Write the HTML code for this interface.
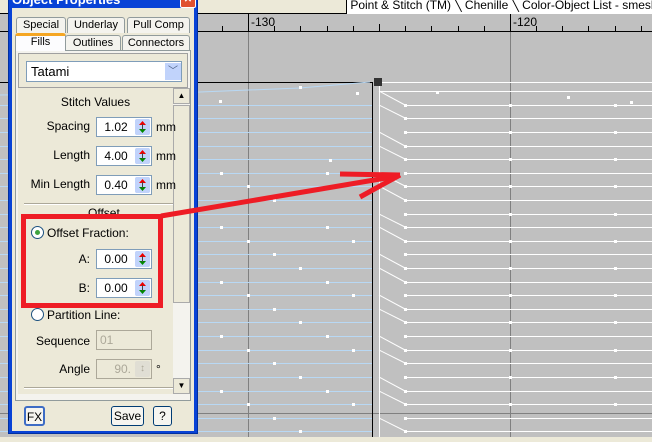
<!DOCTYPE html>
<html><head><meta charset="utf-8"><style>
*{margin:0;padding:0;box-sizing:border-box}
body{width:652px;height:442px;overflow:hidden;background:#c0c0c0;font-family:Tahoma,"Liberation Sans",sans-serif;font-size:12px;position:relative}
.abs{position:absolute}
.tab{position:absolute;border:1px solid #919b9c;border-bottom:none;background:#f4f3ee;border-radius:3px 3px 0 0;text-align:center;font-size:11px;line-height:14px}
.lbl{position:absolute;text-align:right;font-size:12px}
.inp{position:absolute;width:56px;height:20px;border:1px solid #7f9db9;background:#fff;font-size:12px;line-height:18px;padding-right:16px;text-align:center}
.spin{position:absolute;right:1px;top:1px;width:15px;height:16px;background:#c1d3fb;border-radius:2px}
.btn{position:absolute;height:20px;border:1px solid #003c74;border-radius:3px;background:#f6f5f0;text-align:center;line-height:18px;font-size:12px}
</style></head><body>
<div class="abs" style="left:0;top:0;width:652px;height:14px;background:#ece9d8;border-bottom:1px solid #000"></div>
<div class="abs" style="left:346px;top:0;width:306px;height:14px;background:#fff;border-left:1px solid #000;font-size:12px;line-height:10px;white-space:nowrap;overflow:hidden">&nbsp;Point &amp; Stitch (TM) ╲ Chenille ╲ Color-Object List - smesharik_c</div>
<div class="abs" style="left:0;top:14px;width:652px;height:18px;background:#c0c0c0;border-bottom:1px solid #000"></div>
<svg class="abs" style="left:0;top:0" width="652" height="442">
<defs>
<g id="sp"><rect width="15" height="16" rx="2" fill="#c1d3fb"/><path d="M4 6 L7.5 2 L11 6Z" fill="#e00"/><path d="M4 10 L7.5 14 L11 10Z" fill="#080"/><line x1="7.5" y1="5" x2="7.5" y2="11" stroke="#444"/></g>
</defs>
<g stroke="#000" stroke-width="1">
<line x1="248.5" y1="14" x2="248.5" y2="32"/><line x1="510.5" y1="14" x2="510.5" y2="32"/>
<line x1="222.5" y1="26" x2="222.5" y2="32"/><line x1="274.5" y1="26" x2="274.5" y2="32"/><line x1="300.5" y1="26" x2="300.5" y2="32"/><line x1="327.5" y1="26" x2="327.5" y2="32"/><line x1="353.5" y1="26" x2="353.5" y2="32"/><line x1="379.5" y1="24" x2="379.5" y2="32"/><line x1="405.5" y1="26" x2="405.5" y2="32"/><line x1="431.5" y1="26" x2="431.5" y2="32"/><line x1="458.5" y1="26" x2="458.5" y2="32"/><line x1="484.5" y1="26" x2="484.5" y2="32"/><line x1="536.5" y1="26" x2="536.5" y2="32"/><line x1="562.5" y1="26" x2="562.5" y2="32"/><line x1="588.5" y1="26" x2="588.5" y2="32"/><line x1="615.5" y1="26" x2="615.5" y2="32"/><line x1="641.5" y1="26" x2="641.5" y2="32"/>
</g>
<text x="251" y="26" font-size="12" font-family="Liberation Sans">-130</text>
<text x="513" y="26" font-size="12" font-family="Liberation Sans">-120</text>
<g stroke="#808080"><line x1="248.5" y1="32" x2="248.5" y2="437"/><line x1="510.5" y1="32" x2="510.5" y2="437"/><line x1="0" y1="413.5" x2="652" y2="413.5"/></g>
<line x1="0" y1="82.5" x2="372" y2="82.5" stroke="#000"/>
<g stroke="#b8d8f4" stroke-width="1">
<polyline fill="none" points="0,95 200,92 300,88 370,82"/>
<line x1="0" y1="105.5" x2="372" y2="105.5"/><line x1="0" y1="118.5" x2="372" y2="118.5"/><line x1="0" y1="132.5" x2="372" y2="132.5"/><line x1="0" y1="146.5" x2="372" y2="146.5"/><line x1="0" y1="159.5" x2="372" y2="159.5"/><line x1="0" y1="173.5" x2="372" y2="173.5"/><line x1="0" y1="186.5" x2="372" y2="186.5"/><line x1="0" y1="200.5" x2="372" y2="200.5"/><line x1="0" y1="214.5" x2="372" y2="214.5"/><line x1="0" y1="227.5" x2="372" y2="227.5"/><line x1="0" y1="241.5" x2="372" y2="241.5"/><line x1="0" y1="254.5" x2="372" y2="254.5"/><line x1="0" y1="268.5" x2="372" y2="268.5"/><line x1="0" y1="282.5" x2="372" y2="282.5"/><line x1="0" y1="295.5" x2="372" y2="295.5"/><line x1="0" y1="309.5" x2="372" y2="309.5"/><line x1="0" y1="322.5" x2="372" y2="322.5"/><line x1="0" y1="336.5" x2="372" y2="336.5"/><line x1="0" y1="350.5" x2="372" y2="350.5"/><line x1="0" y1="363.5" x2="372" y2="363.5"/><line x1="0" y1="377.5" x2="372" y2="377.5"/><line x1="0" y1="391.5" x2="372" y2="391.5"/><line x1="0" y1="404.5" x2="372" y2="404.5"/><line x1="0" y1="418.5" x2="372" y2="418.5"/><line x1="0" y1="431.5" x2="372" y2="431.5"/>
</g>
<g stroke="#fff" stroke-width="1">
<line x1="379" y1="82.5" x2="652" y2="82.5"/>
<line x1="379" y1="91.5" x2="652" y2="91.5"/><line x1="405" y1="105.5" x2="652" y2="105.5"/><line x1="405" y1="118.5" x2="652" y2="118.5"/><line x1="405" y1="132.5" x2="652" y2="132.5"/><line x1="405" y1="146.5" x2="652" y2="146.5"/><line x1="405" y1="159.5" x2="652" y2="159.5"/><line x1="405" y1="173.5" x2="652" y2="173.5"/><line x1="405" y1="186.5" x2="652" y2="186.5"/><line x1="405" y1="200.5" x2="652" y2="200.5"/><line x1="405" y1="214.5" x2="652" y2="214.5"/><line x1="405" y1="227.5" x2="652" y2="227.5"/><line x1="405" y1="241.5" x2="652" y2="241.5"/><line x1="405" y1="254.5" x2="652" y2="254.5"/><line x1="405" y1="268.5" x2="652" y2="268.5"/><line x1="405" y1="282.5" x2="652" y2="282.5"/><line x1="405" y1="295.5" x2="652" y2="295.5"/><line x1="405" y1="309.5" x2="652" y2="309.5"/><line x1="405" y1="322.5" x2="652" y2="322.5"/><line x1="405" y1="336.5" x2="652" y2="336.5"/><line x1="405" y1="350.5" x2="652" y2="350.5"/><line x1="405" y1="363.5" x2="652" y2="363.5"/><line x1="405" y1="377.5" x2="652" y2="377.5"/><line x1="405" y1="391.5" x2="652" y2="391.5"/><line x1="405" y1="404.5" x2="652" y2="404.5"/><line x1="405" y1="418.5" x2="652" y2="418.5"/><line x1="405" y1="431.5" x2="652" y2="431.5"/>
<polyline fill="none" points="379,91 405,105"/><polyline fill="none" points="379,105 405,118"/><polyline fill="none" points="379,132 405,146"/><polyline fill="none" points="379,146 405,159"/><polyline fill="none" points="379,173 405,186"/><polyline fill="none" points="379,186 405,200"/><polyline fill="none" points="379,214 405,227"/><polyline fill="none" points="379,227 405,241"/><polyline fill="none" points="379,254 405,268"/><polyline fill="none" points="379,268 405,282"/><polyline fill="none" points="379,295 405,309"/><polyline fill="none" points="379,309 405,322"/><polyline fill="none" points="379,336 405,350"/><polyline fill="none" points="379,350 405,363"/><polyline fill="none" points="379,377 405,391"/><polyline fill="none" points="379,391 405,404"/><polyline fill="none" points="379,418 405,431"/>
<line x1="379.5" y1="82" x2="379.5" y2="437"/>
</g>
<line x1="372.5" y1="82" x2="372.5" y2="437" stroke="#000"/>
<rect x="374" y="78" width="8" height="8" fill="#333"/>
<g fill="#fff">
<rect x="219" y="100" width="3" height="3"/><rect x="299" y="86" width="3" height="3"/><rect x="356" y="92" width="3" height="3"/>
<rect x="329" y="159" width="3" height="3"/><rect x="220" y="172" width="3" height="3"/><rect x="326" y="172" width="3" height="3"/><rect x="247" y="185" width="3" height="3"/><rect x="273" y="199" width="3" height="3"/><rect x="220" y="226" width="3" height="3"/><rect x="326" y="226" width="3" height="3"/><rect x="247" y="240" width="3" height="3"/><rect x="352" y="240" width="3" height="3"/><rect x="273" y="253" width="3" height="3"/><rect x="299" y="267" width="3" height="3"/><rect x="220" y="281" width="3" height="3"/><rect x="326" y="281" width="3" height="3"/><rect x="247" y="294" width="3" height="3"/><rect x="352" y="294" width="3" height="3"/><rect x="273" y="308" width="3" height="3"/><rect x="299" y="321" width="3" height="3"/><rect x="220" y="335" width="3" height="3"/><rect x="326" y="335" width="3" height="3"/><rect x="247" y="349" width="3" height="3"/><rect x="352" y="349" width="3" height="3"/><rect x="273" y="362" width="3" height="3"/><rect x="299" y="376" width="3" height="3"/><rect x="220" y="390" width="3" height="3"/><rect x="326" y="390" width="3" height="3"/><rect x="247" y="403" width="3" height="3"/><rect x="352" y="403" width="3" height="3"/><rect x="273" y="417" width="3" height="3"/><rect x="299" y="430" width="3" height="3"/>
<rect x="404" y="104" width="3" height="3"/><rect x="404" y="117" width="3" height="3"/><rect x="404" y="131" width="3" height="3"/><rect x="404" y="145" width="3" height="3"/><rect x="404" y="158" width="3" height="3"/><rect x="404" y="172" width="3" height="3"/><rect x="404" y="185" width="3" height="3"/><rect x="404" y="199" width="3" height="3"/><rect x="404" y="213" width="3" height="3"/><rect x="404" y="226" width="3" height="3"/><rect x="404" y="240" width="3" height="3"/><rect x="404" y="253" width="3" height="3"/><rect x="404" y="267" width="3" height="3"/><rect x="404" y="281" width="3" height="3"/><rect x="404" y="294" width="3" height="3"/><rect x="404" y="308" width="3" height="3"/><rect x="404" y="321" width="3" height="3"/><rect x="404" y="335" width="3" height="3"/><rect x="404" y="349" width="3" height="3"/><rect x="404" y="362" width="3" height="3"/><rect x="404" y="376" width="3" height="3"/><rect x="404" y="390" width="3" height="3"/><rect x="404" y="403" width="3" height="3"/><rect x="404" y="417" width="3" height="3"/><rect x="404" y="430" width="3" height="3"/>
<rect x="509" y="104" width="3" height="3"/><rect x="509" y="131" width="3" height="3"/><rect x="509" y="158" width="3" height="3"/><rect x="509" y="185" width="3" height="3"/><rect x="509" y="213" width="3" height="3"/><rect x="509" y="240" width="3" height="3"/><rect x="509" y="267" width="3" height="3"/><rect x="509" y="294" width="3" height="3"/><rect x="509" y="321" width="3" height="3"/><rect x="509" y="349" width="3" height="3"/><rect x="509" y="376" width="3" height="3"/><rect x="509" y="403" width="3" height="3"/>
<rect x="614" y="104" width="3" height="3"/><rect x="614" y="131" width="3" height="3"/><rect x="614" y="158" width="3" height="3"/><rect x="614" y="185" width="3" height="3"/><rect x="614" y="213" width="3" height="3"/><rect x="614" y="240" width="3" height="3"/><rect x="614" y="267" width="3" height="3"/><rect x="614" y="294" width="3" height="3"/><rect x="614" y="321" width="3" height="3"/><rect x="614" y="349" width="3" height="3"/><rect x="614" y="376" width="3" height="3"/><rect x="614" y="403" width="3" height="3"/>
<rect x="436" y="91" width="3" height="3"/><rect x="567" y="96" width="3" height="3"/><rect x="630" y="101" width="3" height="3"/>
</g>
</svg>
<div class="abs" style="left:0;top:437px;width:652px;height:5px;background:#ece9d8"></div>
<div class="abs" style="left:8px;top:-10px;width:190px;height:444px;background:#0842d6;border-radius:6px 6px 0 0;border:1px solid #002fa0"></div>
<div class="abs" style="left:12px;top:-8px;font-weight:bold;color:#fff;font-size:13px">Object Properties</div>
<div class="abs" style="left:180px;top:-6px;width:16px;height:14px;background:#e0512f;border:1px solid #fff;border-radius:2px;color:#fff;font-size:10px;text-align:center;line-height:10px;font-weight:bold">✕</div>
<div class="abs" style="left:12px;top:8px;width:182px;height:423px;background:#ece9d8"></div>
<div class="tab" style="left:16px;top:17px;width:50px;height:16px">Special</div>
<div class="tab" style="left:67px;top:17px;width:58px;height:16px">Underlay</div>
<div class="tab" style="left:127px;top:17px;width:63px;height:16px">Pull Comp</div>
<div class="abs" style="left:15px;top:50px;width:176px;height:351px;background:#f4f3ee;border:1px solid #919b9c"></div>
<div class="tab" style="left:15px;top:33px;width:51px;height:18px;background:#fcfcfe;border-top:3px solid #f5a623;z-index:2;line-height:13px">Fills</div>
<div class="tab" style="left:65px;top:35px;width:56px;height:15px">Outlines</div>
<div class="tab" style="left:122px;top:35px;width:68px;height:15px">Connectors</div>
<div class="abs" style="left:18px;top:53px;width:170px;height:35px;border:1px solid #a0a0a0;background:#ece9d8"></div>
<div class="abs" style="left:26px;top:61px;width:156px;height:21px;background:#fff;border:1px solid #7f9db9;font-size:13px;line-height:19px;padding-left:4px">Tatami</div>
<div class="abs" style="left:165px;top:63px;width:16px;height:17px;background:#c1d3fb;color:#4d6185;font-size:10px;text-align:center;line-height:17px">﹀</div>
<div class="abs" style="left:18px;top:88px;width:155px;height:306px;background:#ece9d8"></div>
<div class="abs" style="left:173px;top:88px;width:17px;height:306px;background:#f4f3ee"></div>
<div class="abs" style="left:173px;top:88px;width:17px;height:16px;background:#ece9d8;border:1px solid #aaa;font-size:8px;text-align:center;line-height:14px">▲</div>
<div class="abs" style="left:173px;top:105px;width:17px;height:198px;background:#ece9d8;border:1px solid #aaa"></div>
<div class="abs" style="left:173px;top:378px;width:17px;height:16px;background:#ece9d8;border:1px solid #aaa;font-size:8px;text-align:center;line-height:14px">▼</div>
<div class="abs" style="left:18px;top:95px;width:155px;text-align:center;font-size:12px">Stitch Values</div>
<div class="lbl" style="left:20px;top:119px;width:70px">Spacing</div>
<div class="inp" style="left:96px;top:117px">1.02<svg class="spin" viewBox="0 0 15 16"><use href="#sp"/></svg></div><div class="abs" style="left:156px;top:120px">mm</div>
<div class="lbl" style="left:20px;top:148px;width:70px">Length</div>
<div class="inp" style="left:96px;top:146px">4.00<svg class="spin" viewBox="0 0 15 16"><use href="#sp"/></svg></div><div class="abs" style="left:156px;top:149px">mm</div>
<div class="lbl" style="left:20px;top:177px;width:70px">Min Length</div>
<div class="inp" style="left:96px;top:175px">0.40<svg class="spin" viewBox="0 0 15 16"><use href="#sp"/></svg></div><div class="abs" style="left:156px;top:178px">mm</div>
<div class="abs" style="left:24px;top:203px;width:149px;height:2px;border-top:1px solid #aca899;border-bottom:1px solid #fff"></div>
<div class="abs" style="left:88px;top:206px;font-size:12px">Offset</div>
<div class="abs" style="left:31px;top:226px;width:13px;height:13px;border-radius:50%;border:1px solid #1c5180;background:#fff"><div style="margin:3px;width:5px;height:5px;border-radius:50%;background:#3fa33f"></div></div>
<div class="abs" style="left:47px;top:226px">Offset Fraction:</div>
<div class="lbl" style="left:20px;top:252px;width:70px">A:</div>
<div class="inp" style="left:96px;top:249px">0.00<svg class="spin" viewBox="0 0 15 16"><use href="#sp"/></svg></div>
<div class="lbl" style="left:20px;top:281px;width:70px">B:</div>
<div class="inp" style="left:96px;top:278px">0.00<svg class="spin" viewBox="0 0 15 16"><use href="#sp"/></svg></div>
<div class="abs" style="left:31px;top:308px;width:13px;height:13px;border-radius:50%;border:1px solid #1c5180;background:#fff"></div>
<div class="abs" style="left:47px;top:308px">Partition Line:</div>
<div class="lbl" style="left:20px;top:334px;width:70px">Sequence</div>
<div class="inp" style="left:96px;top:330px;border-color:#aca899;background:#ece9d8;color:#aca899;padding-left:3px;text-align:left">01</div>
<div class="lbl" style="left:20px;top:362px;width:70px">Angle</div>
<div class="inp" style="left:96px;top:359px;border-color:#aca899;background:#ece9d8;color:#aca899;text-align:right;padding-right:20px">90.<div class="spin" style="background:#e0ded4;color:#aca899;font-size:10px;line-height:16px;text-align:center">↕</div></div>
<div class="abs" style="left:156px;top:362px">°</div>
<div class="abs" style="left:24px;top:387px;width:149px;height:2px;border-top:1px solid #aca899;border-bottom:1px solid #fff"></div>
<div class="btn" style="left:24px;top:406px;width:21px;border:2px solid #3d6cc5">FX</div>
<div class="btn" style="left:111px;top:406px;width:33px">Save</div>
<div class="btn" style="left:153px;top:406px;width:19px">?</div>
<svg class="abs" style="left:0;top:0" width="652" height="442">
<rect x="23.5" y="216.5" width="137" height="89" fill="none" stroke="#ee1c25" stroke-width="5"/>
<line x1="161" y1="216" x2="398" y2="176" stroke="#ee1c25" stroke-width="5"/>
<line x1="340" y1="174" x2="400" y2="175" stroke="#ee1c25" stroke-width="5"/>
<line x1="360" y1="197" x2="400" y2="175" stroke="#ee1c25" stroke-width="5"/>
</svg>
</body></html>
